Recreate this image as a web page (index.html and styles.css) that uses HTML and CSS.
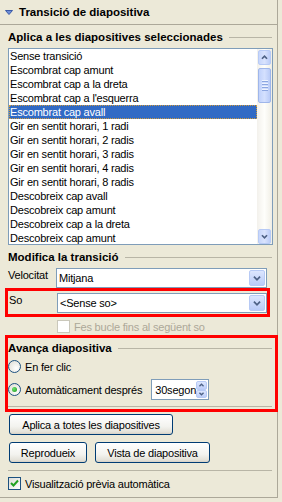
FILE: index.html
```html
<!DOCTYPE html>
<html>
<head>
  <title>Transició de diapositiva</title>
  <link rel="stylesheet" href="styles.css">
</head>
<body>
  <div class="pane">
    <div class="pane-head">
      <svg class="head-arrow" width="8" height="5" viewBox="0 0 8 5"><polygon points="0.5,0.5 7.5,0.5 4,4.5" fill="#6f8fd8" stroke="#3a5aa8" stroke-width="1"/></svg>
      <span>Transició de diapositiva</span>
    </div>

    <div class="pane-body">
      <div class="group-title"><span>Aplica a les diapositives seleccionades</span></div>

      <div class="listbox">
        <ul class="items">
          <li>Sense transició</li>
          <li>Escombrat cap amunt</li>
          <li>Escombrat cap a la dreta</li>
          <li>Escombrat cap a l'esquerra</li>
          <li class="selected">Escombrat cap avall</li>
          <li>Gir en sentit horari, 1 radi</li>
          <li>Gir en sentit horari, 2 radis</li>
          <li>Gir en sentit horari, 3 radis</li>
          <li>Gir en sentit horari, 4 radis</li>
          <li>Gir en sentit horari, 8 radis</li>
          <li>Descobreix cap avall</li>
          <li>Descobreix cap amunt</li>
          <li>Descobreix cap a la dreta</li>
          <li>Descobreix cap amunt</li>
        </ul>
        <div class="vscroll">
          <div class="sb-btn">
            <svg width="13" height="13" viewBox="0 0 13 13"><polyline points="3.5,8 6.5,5 9.5,8" fill="none" stroke="#4d6185" stroke-width="2"/></svg>
          </div>
          <div class="sb-thumb">
            <i></i><i></i><i></i><i></i>
          </div>
          <div class="sb-track"></div>
          <div class="sb-btn">
            <svg width="13" height="13" viewBox="0 0 13 13"><polyline points="3.5,5 6.5,8 9.5,5" fill="none" stroke="#4d6185" stroke-width="2"/></svg>
          </div>
        </div>
      </div>

      <div class="group-title title-mod"><span>Modifica la transició</span></div>

      <div class="field-row">
        <label class="field-label">Velocitat</label>
        <div class="combo">
          <span class="combo-text">Mitjana</span>
          <span class="combo-btn"><svg width="16" height="16" viewBox="0 0 16 16"><polyline points="4.5,6.5 8,10 11.5,6.5" fill="none" stroke="#4d6185" stroke-width="2"/></svg></span>
        </div>
      </div>

      <div class="mark mark-sound">
        <div class="field-row">
          <label class="field-label">So</label>
          <div class="combo">
            <span class="combo-text">&lt;Sense so&gt;</span>
            <span class="combo-btn"><svg width="16" height="16" viewBox="0 0 16 16"><polyline points="4.5,6.5 8,10 11.5,6.5" fill="none" stroke="#4d6185" stroke-width="2"/></svg></span>
          </div>
        </div>
      </div>

      <div class="check-row loop disabled">
        <span class="checkbox"></span>
        <span>Fes bucle fins al següent so</span>
      </div>

      <div class="mark mark-advance">
        <div class="group-title"><span>Avança diapositiva</span></div>
        <div class="radio-row first">
          <span class="radio"></span>
          <span>En fer clic</span>
        </div>
        <div class="radio-row second">
          <span class="radio checked"><i></i></span>
          <span>Automàticament després</span>
          <div class="spinner">
            <span class="spin-text">30segon</span>
            <span class="spin-btns">
              <span class="spin-btn"><svg width="11" height="7" viewBox="0 0 11 7"><polyline points="3,5 5.5,2.5 8,5" fill="none" stroke="#4d6185" stroke-width="1.6"/></svg></span>
              <span class="spin-btn"><svg width="11" height="7" viewBox="0 0 11 7"><polyline points="3,2 5.5,4.5 8,2" fill="none" stroke="#4d6185" stroke-width="1.6"/></svg></span>
            </span>
          </div>
        </div>
        <div class="separator"></div>
      </div>

      <div class="buttons">
        <button class="btn btn-all">Aplica a totes les diapositives</button>
        <div class="btn-row">
          <button class="btn btn-play">Reprodueix</button>
          <button class="btn btn-view">Vista de diapositiva</button>
        </div>
      </div>

      <div class="separator sep-bottom"></div>

      <div class="check-row preview">
        <span class="checkbox checked"><svg width="11" height="11" viewBox="0 0 11 11"><polyline points="2,5 4.5,7.5 9,2.5" fill="none" stroke="#21a121" stroke-width="2"/></svg></span>
        <span>Visualització prèvia automàtica</span>
      </div>
    </div>
  </div>
</body>
</html>
```

FILE: styles.css
```css
/* Panell de transició (estil Windows XP) */

body {
  margin: 0;
  background-color: #ece9d8;
  font-family: "Liberation Sans", Arial, sans-serif;
  font-size: 11px;
  letter-spacing: -0.2px;
  color: #000;
}

.pane {
  width: 278px;
  height: 498px;
  box-sizing: border-box;
  border-right: 1px solid #aca899;
  border-bottom: 1px solid #aca899;
}

.pane-head {
  height: 25px;
  box-sizing: border-box;
  border-bottom: 1px solid #aca899;
  display: flex;
  align-items: center;
  padding-left: 5px;
  font-weight: bold;
  font-size: 11.5px;
  letter-spacing: 0;
}

.head-arrow {
  margin-right: 6px;
  margin-top: 1px;
}

.pane-body {
  padding: 5px 5px 0 8px;
}

/* títols de grup amb línia */
.group-title {
  display: flex;
  align-items: center;
  height: 14px;
  font-weight: bold;
  font-size: 11.5px;
  letter-spacing: 0;
}

.group-title::after {
  content: "";
  flex: 1;
  height: 1px;
  background-color: #b8b5a6;
  margin-left: 6px;
}

.title-mod {
  margin-top: 5px;
}

/* llista */
.listbox {
  margin-top: 4px;
  width: 265px;
  height: 197px;
  box-sizing: border-box;
  border: 1px solid #7f9db9;
  background-color: #fff;
  display: flex;
  overflow: hidden;
}

.items {
  list-style: none;
  margin: 0;
  padding: 0;
  flex: 1;
  overflow: hidden;
}

.items li {
  height: 14px;
  line-height: 14px;
  padding-left: 1px;
  white-space: nowrap;
}

.items li.selected {
  background-color: #316ac5;
  color: #fff;
  outline: 1px dotted #d09a3c;
  outline-offset: -1px;
}

.vscroll {
  width: 15px;
  display: flex;
  flex-direction: column;
  background: linear-gradient(to right, #f3f1ec, #fefefb 50%, #f0eee5);
  padding: 1px 1px 0 1px;
  box-sizing: border-box;
}

.sb-btn {
  height: 13px;
  border: 1px solid #b7caf5;
  border-radius: 2px;
  background: linear-gradient(to right, #c7d6fb, #d9e3fd 50%, #bccdf8);
  display: flex;
  align-items: center;
  justify-content: center;
}

.sb-thumb {
  margin-top: 3px;
  height: 33px;
  border: 1px solid #9fb6ea;
  border-radius: 2px;
  background: linear-gradient(to right, #c1d2fb, #d4e0fe 50%, #b9cbf7);
  display: flex;
  flex-direction: column;
  align-items: center;
  justify-content: center;
  gap: 1px;
}

.sb-thumb i {
  display: block;
  width: 6px;
  height: 1px;
  background-color: #eef3fe;
  border-bottom: 1px solid #8ca6e0;
}

.sb-track {
  flex: 1;
}

/* files de camp */
.field-row {
  display: flex;
  align-items: flex-start;
  margin-top: 4px;
}

.field-label {
  width: 48px;
  padding-top: 1px;
}

.combo {
  width: 211px;
  height: 20px;
  box-sizing: border-box;
  border: 1px solid #7f9db9;
  background-color: #fff;
  display: flex;
  align-items: center;
  justify-content: space-between;
  padding: 0 1px 0 2px;
}

.combo-btn {
  width: 16px;
  height: 16px;
  border: 1px solid #b7caf5;
  box-sizing: border-box;
  border-radius: 2px;
  background: linear-gradient(#dce6fe, #b9cbf8);
  display: flex;
  align-items: center;
  justify-content: center;
}

.combo-btn svg {
  width: 14px;
  height: 14px;
}

/* requadres vermells */
.mark {
  border: 3px solid #ff0000;
  margin-left: -3px;
  box-sizing: border-box;
}

.mark-sound {
  width: 265px;
  height: 29px;
}

.mark-sound .field-row {
  margin-top: 2px;
}

.mark-sound .field-label {
  width: 48px;
  padding-left: 1px;
  padding-top: 1px;
}

.mark-sound .combo {
  width: 210px;
}

.mark-advance {
  width: 273px;
  height: 77px;
  margin-top: 2px;
  padding-top: 3px;
}

.mark-advance .group-title {
  width: 264px;
}

/* caselles */
.check-row {
  display: flex;
  align-items: center;
  height: 13px;
  gap: 4px;
}

.loop {
  margin-top: 3px;
  margin-left: 49px;
}

.disabled {
  color: #aca899;
}

.checkbox {
  width: 13px;
  height: 13px;
  box-sizing: border-box;
  border: 1px solid #1c5180;
  background: linear-gradient(135deg, #dcdcd7, #fff);
  display: flex;
  align-items: center;
  justify-content: center;
}

.disabled .checkbox {
  border-color: #cac8bb;
  background: #fff;
}

.radio-row {
  display: flex;
  align-items: center;
  gap: 4px;
}

.radio-row.first {
  margin-top: 5px;
  height: 13px;
}

.radio-row.second {
  margin-top: 6px;
  height: 21px;
}

.radio {
  width: 13px;
  height: 13px;
  box-sizing: border-box;
  border: 1px solid #1c5180;
  border-radius: 50%;
  background: radial-gradient(circle at 65% 65%, #fff, #e2e1da 80%);
  display: flex;
  align-items: center;
  justify-content: center;
}

.radio.checked i {
  display: block;
  width: 5px;
  height: 5px;
  border-radius: 50%;
  background: radial-gradient(circle at 35% 35%, #6ee36e, #18961b);
}

.spinner {
  margin-left: 5px;
  width: 58px;
  height: 21px;
  box-sizing: border-box;
  border: 1px solid #7f9db9;
  background-color: #fff;
  display: flex;
  align-items: center;
  justify-content: space-between;
  padding: 1px;
}

.spin-text {
  padding-left: 2px;
}

.spin-btns {
  display: flex;
  flex-direction: column;
  height: 17px;
  width: 12px;
}

.spin-btn {
  flex: 1;
  border: 1px solid #b7caf5;
  border-radius: 2px;
  background: linear-gradient(#dce6fe, #bccdf8);
  display: flex;
  align-items: center;
  justify-content: center;
}

.spin-btn svg {
  width: 9px;
  height: 6px;
}

.separator {
  height: 1px;
  background-color: #b8b5a6;
  width: 264px;
  margin-top: 6px;
}

/* botons */
.buttons {
  margin-top: 2px;
  margin-left: 1px;
}

.btn {
  font-family: "Liberation Sans", Arial, sans-serif;
  font-size: 11px;
  letter-spacing: -0.2px;
  color: #000;
  height: 21px;
  padding: 0;
  border: 1px solid #003c74;
  border-radius: 3px;
  background: linear-gradient(#ffffff, #f3f3ef 60%, #e3e1d8 90%, #d6d0c5);
  display: block;
}

.btn-all {
  width: 164px;
}

.btn-row {
  display: flex;
  gap: 8px;
  margin-top: 7px;
}

.btn-play {
  width: 78px;
}

.btn-view {
  width: 115px;
}

.sep-bottom {
  margin-top: 7px;
}

.preview {
  margin-top: 6px;
}
```
